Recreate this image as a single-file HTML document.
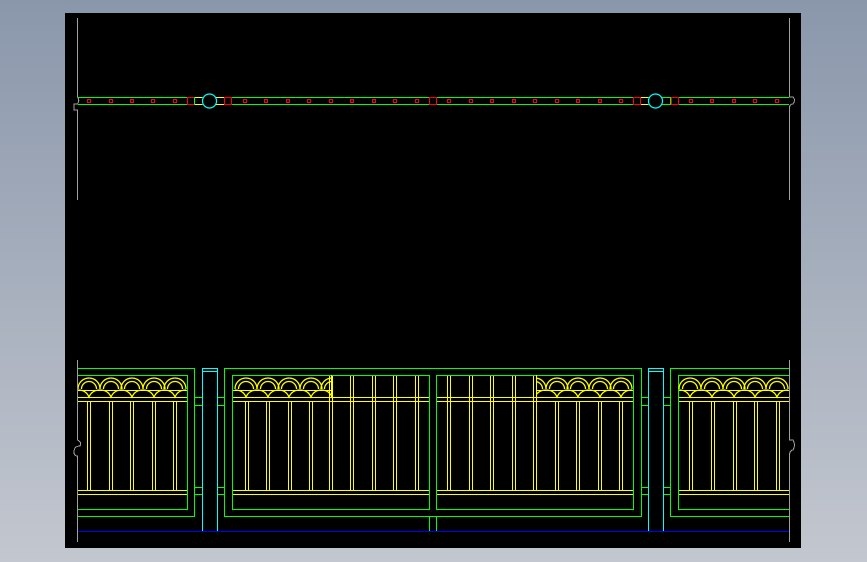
<!DOCTYPE html>
<html><head><meta charset="utf-8"><style>
html,body{margin:0;padding:0;width:867px;height:562px;overflow:hidden;background:linear-gradient(#8a97ab,#c3c7cf);}
svg{display:block}
</style></head><body>
<svg width="867" height="562" viewBox="0 0 867 562" xmlns="http://www.w3.org/2000/svg" shape-rendering="crispEdges">
<defs>
<g id="sc" fill="none" stroke="#ffff00" stroke-width="1.3">
<path d="M-11,13 A11,11 0 0 1 11,13" shape-rendering="auto"/>
<path d="M-7.5,13 A7.5,7.5 0 0 1 7.5,13" shape-rendering="auto"/>
<path d="M-11,14 Q-3,14 0,21 Q3,14 11,14" shape-rendering="auto"/>
</g>
<clipPath id="c1"><rect x="78" y="375" width="109" height="30"/></clipPath>
<clipPath id="c2"><rect x="232" y="375" width="100" height="30"/></clipPath>
<clipPath id="c3"><rect x="536" y="375" width="98" height="30"/></clipPath>
<clipPath id="c4"><rect x="678" y="375" width="111" height="30"/></clipPath>
</defs>
<rect x="65" y="13" width="736" height="535" fill="#000"/>
<g stroke="#a0a0a0" fill="none" stroke-width="1">
<path d="M77.5,18 V97 Q80,100 77.5,104 H74 V110 H77.5 V200"/>
<path d="M789.5,18 V97 H793 Q796,100 793,104 Q789.5,104 789.5,108 V200"/>
<path d="M77.5,360 V440 Q82,442 80,446 Q74,446 74,452 Q74,456 77.5,456 V542"/>
<path d="M789.5,360 V440 H793 Q796,445 793,450 Q789.5,450 789.5,456 V542"/>
</g>
<g stroke="#00ff00" stroke-width="1.2">
<line x1="78" y1="97.5" x2="789" y2="97.5"/><line x1="78" y1="104.5" x2="789" y2="104.5"/>
</g>
<g fill="none" stroke="#ff0000" stroke-width="1">
<rect x="87.5" y="99.5" width="3" height="3"/><rect x="109.5" y="99.5" width="3" height="3"/><rect x="130.5" y="99.5" width="3" height="3"/><rect x="151.5" y="99.5" width="3" height="3"/><rect x="173.5" y="99.5" width="3" height="3"/>
<rect x="243.5" y="99.5" width="3" height="3"/><rect x="264.5" y="99.5" width="3" height="3"/><rect x="286.5" y="99.5" width="3" height="3"/><rect x="307.5" y="99.5" width="3" height="3"/><rect x="329.5" y="99.5" width="3" height="3"/><rect x="350.5" y="99.5" width="3" height="3"/><rect x="372.5" y="99.5" width="3" height="3"/><rect x="393.5" y="99.5" width="3" height="3"/><rect x="415.5" y="99.5" width="3" height="3"/>
<rect x="447.5" y="99.5" width="3" height="3"/><rect x="469.5" y="99.5" width="3" height="3"/><rect x="490.5" y="99.5" width="3" height="3"/><rect x="512.5" y="99.5" width="3" height="3"/><rect x="533.5" y="99.5" width="3" height="3"/><rect x="555.5" y="99.5" width="3" height="3"/><rect x="576.5" y="99.5" width="3" height="3"/><rect x="598.5" y="99.5" width="3" height="3"/><rect x="619.5" y="99.5" width="3" height="3"/>
<rect x="689.5" y="99.5" width="3" height="3"/><rect x="710.5" y="99.5" width="3" height="3"/><rect x="732.5" y="99.5" width="3" height="3"/><rect x="753.5" y="99.5" width="3" height="3"/><rect x="775.5" y="99.5" width="3" height="3"/>
<rect x="187.5" y="97.5" width="7" height="7"/><rect x="224.5" y="97.5" width="7" height="7"/><rect x="429.5" y="97.5" width="7" height="7"/><rect x="633.5" y="97.5" width="7" height="7"/><rect x="671.5" y="97.5" width="7" height="7"/>
</g>
<g stroke="#ffff00" stroke-width="1"><line x1="195" y1="97.5" x2="202" y2="97.5"/><line x1="195" y1="104.5" x2="202" y2="104.5"/><line x1="216" y1="97.5" x2="224" y2="97.5"/><line x1="216" y1="104.5" x2="224" y2="104.5"/><line x1="641" y1="97.5" x2="648" y2="97.5"/><line x1="641" y1="104.5" x2="648" y2="104.5"/></g>
<g stroke="#00ff00"><line x1="194.5" y1="97" x2="194.5" y2="105"/><line x1="670.5" y1="97" x2="670.5" y2="105"/></g>
<g fill="#000" stroke="#00ffff" stroke-width="1.2" shape-rendering="auto"><circle cx="209.5" cy="101" r="7"/><circle cx="655.5" cy="101" r="7"/></g>

<g fill="none" stroke="#00ff00" stroke-width="1.2">
<path d="M78,368.5 H194.5 V516.5 H78"/>
<path d="M78,375.5 H187.5 V509.5 H78"/>
<rect x="224.5" y="368.5" width="417" height="148"/>
<rect x="232.5" y="375.5" width="197" height="134"/>
<rect x="436.5" y="375.5" width="197" height="134"/>
<path d="M429.5,516.5 V531 M436.5,516.5 V531"/>
<path d="M789,368.5 H670.5 V516.5 H789"/>
<path d="M789,375.5 H678.5 V509.5 H789"/>
<path d="M194,397.5 H202 M194,405.5 H202 M194,487.5 H202 M194,494.5 H202 M217,397.5 H225 M217,405.5 H225 M217,487.5 H225 M217,494.5 H225"/>
<path d="M641,397.5 H648 M641,405.5 H648 M641,487.5 H648 M641,494.5 H648 M663,397.5 H670 M663,405.5 H670 M663,487.5 H670 M663,494.5 H670"/>
</g>
<g fill="none" stroke="#00ffff" stroke-width="1.2">
<path d="M202.5,532 V368.5 H217.5 V532 M202.5,371.5 H217.5"/>
<path d="M648.5,532 V368.5 H663.5 V532 M648.5,371.5 H663.5"/>
</g>
<line x1="78" y1="531.5" x2="789" y2="531.5" stroke="#0000ff" stroke-width="1"/>
<g stroke="#ffff00" stroke-width="1">
<path d="M78,397.5 H187 M78,401.5 H187 M78,490.5 H187 M78,494.5 H187"/>
<path d="M233,397.5 H429 M233,401.5 H429 M233,490.5 H429 M233,494.5 H429"/>
<path d="M437,397.5 H633 M437,401.5 H633 M437,490.5 H633 M437,494.5 H633"/>
<path d="M679,397.5 H789 M679,401.5 H789 M679,490.5 H789 M679,494.5 H789"/>
<path d="M78,390.5 H187 M233,390.5 H331 M537,390.5 H633 M679,390.5 H789"/>
<path d="M331.5,375 V398 M536.5,375 V398"/>
</g>
<g stroke="#ffff00" stroke-width="1">
<path d="M87.5,401 V490 M90.5,401 V490 M109.5,401 V490 M112.5,401 V490 M130.5,401 V490 M133.5,401 V490 M152.5,401 V490 M155.5,401 V490 M173.5,401 V490 M176.5,401 V490"/>
<path d="M245.5,401 V490 M248.5,401 V490 M266.5,401 V490 M269.5,401 V490 M288.5,401 V490 M291.5,401 V490 M309.5,401 V490 M312.5,401 V490"/>
<path d="M329.5,376 V490 M332.5,376 V490 M350.5,376 V490 M353.5,376 V490 M372.5,376 V490 M375.5,376 V490 M393.5,376 V490 M396.5,376 V490 M415.5,376 V490 M418.5,376 V490"/>
<path d="M447.5,376 V490 M450.5,376 V490 M469.5,376 V490 M472.5,376 V490 M490.5,376 V490 M493.5,376 V490 M512.5,376 V490 M515.5,376 V490 M533.5,376 V490 M536.5,376 V490"/>
<path d="M555.5,401 V490 M558.5,401 V490 M576.5,401 V490 M579.5,401 V490 M598.5,401 V490 M601.5,401 V490 M619.5,401 V490 M622.5,401 V490"/>
<path d="M689.5,401 V490 M692.5,401 V490 M711.5,401 V490 M714.5,401 V490 M733.5,401 V490 M736.5,401 V490 M754.5,401 V490 M757.5,401 V490 M776.5,401 V490 M779.5,401 V490"/>
</g>
<g clip-path="url(#c1)"><use href="#sc" x="89" y="376"/><use href="#sc" x="111" y="376"/><use href="#sc" x="132" y="376"/><use href="#sc" x="154" y="376"/><use href="#sc" x="175" y="376"/></g>
<g clip-path="url(#c2)"><use href="#sc" x="246" y="376"/><use href="#sc" x="268" y="376"/><use href="#sc" x="289" y="376"/><use href="#sc" x="311" y="376"/><use href="#sc" x="332" y="376"/></g>
<g clip-path="url(#c3)"><use href="#sc" x="535" y="376"/><use href="#sc" x="557" y="376"/><use href="#sc" x="578" y="376"/><use href="#sc" x="600" y="376"/><use href="#sc" x="621" y="376"/></g>
<g clip-path="url(#c4)"><use href="#sc" x="690" y="376"/><use href="#sc" x="712" y="376"/><use href="#sc" x="734" y="376"/><use href="#sc" x="755" y="376"/><use href="#sc" x="777" y="376"/></g>
</svg>
</body></html>
